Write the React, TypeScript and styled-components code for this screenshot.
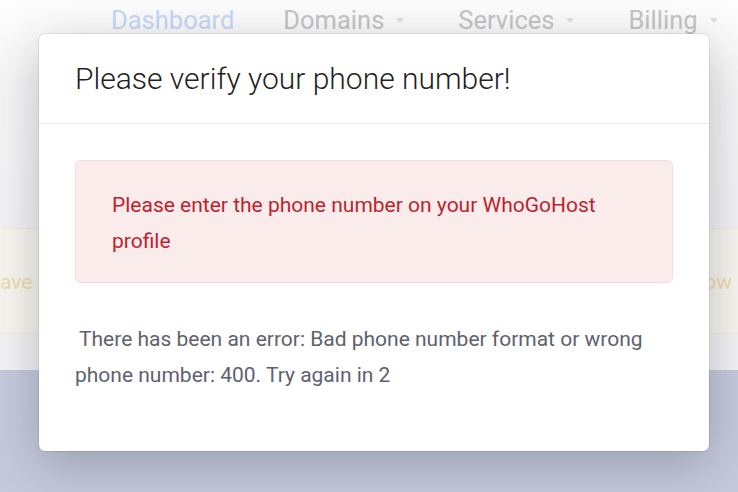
import React from "react";
import styled, { createGlobalStyle } from "styled-components";

const Global = createGlobalStyle`
  html, body { margin: 0; padding: 0; }
  body {
    font-family: Roboto, "Noto Sans", "Liberation Sans", sans-serif;
    background: #f4f4f5;
    overflow: hidden;
  }
`;

const Page = styled.div`
  position: relative;
  width: 738px;
  height: 492px;
  overflow: hidden;
  display: flex;
  flex-direction: column;
  background: #f4f4f5;
`;

const Top = styled.div`
  height: 228px;
  background: linear-gradient(to bottom, #fdfdfd 0px, #f6f6f6 90px, #f3f3f4 228px);
`;

const TopBar = styled.nav`
  height: 39px;
  display: flex;
  align-items: center;
  gap: 49px;
  padding-left: 111px;
  white-space: nowrap;
`;

const NavItem = styled.span<{ $active?: boolean }>`
  font-size: 25.5px;
  font-weight: 400;
  color: ${(p) => (p.$active ? "#c6d7f6" : "#c4c4c4")};
  display: flex;
  align-items: center;
  gap: 12px;
`;

const Caret = styled.span`
  width: 0;
  height: 0;
  border-left: 4.5px solid transparent;
  border-right: 4.5px solid transparent;
  border-top: 5px solid #dedede;
  margin-top: 2px;
  margin-right: 5px;
`;

const WarnBand = styled.div`
  height: 102px;
  border-top: 1px solid #f3ecdc;
  border-bottom: 1px solid #f3ecdc;
  background: #f8f6ef;
  display: flex;
  align-items: center;
  justify-content: space-between;
  padding: 2px 6px 0 0;
  font-size: 21px;
  color: #efdcae;
`;

const Gap = styled.div`
  height: 36px;
  background: #f3f3f4;
`;

const Lower = styled.div`
  flex: 1;
  background: #c5cadc;
`;

const Modal = styled.div`
  position: absolute;
  left: 39px;
  top: 34px;
  width: 670px;
  height: 417px;
  box-sizing: border-box;
  background: #fff;
  border-radius: 6px;
  box-shadow: 0 0 0 1px rgba(0, 0, 0, 0.08), 0 14px 50px rgba(40, 40, 60, 0.28);
  display: flex;
  flex-direction: column;
`;

const ModalHeader = styled.div`
  height: 90px;
  box-sizing: border-box;
  padding: 0 36px;
  display: flex;
  align-items: center;
  border-bottom: 1px solid #e6e6e6;
`;

const Title = styled.h2`
  margin: 0;
  font-size: 30px;
  font-weight: 300;
  color: #1f1f1f;
`;

const ModalBody = styled.div`
  padding: 36px;
`;

const Alert = styled.div`
  background: #fbecec;
  border: 1px solid #f7dadc;
  border-radius: 6px;
  padding: 26px 36px 23px;
  font-size: 21px;
  line-height: 36px;
  color: #c01f2f;
`;

const Message = styled.p`
  margin: 38px 0 0;
  font-size: 21px;
  line-height: 36px;
  color: #5e626e;
  text-indent: 4px;
`;

export default function App() {
  return (
    <>
      <Global />
      <Page>
        <Top>
          <TopBar>
            <NavItem $active>Dashboard</NavItem>
            <NavItem>
              Domains <Caret />
            </NavItem>
            <NavItem>
              Services <Caret />
            </NavItem>
            <NavItem>
              Billing <Caret />
            </NavItem>
          </TopBar>
        </Top>
        <WarnBand>
          <span>ave</span>
          <span>ow</span>
        </WarnBand>
        <Gap />
        <Lower />
        <Modal>
          <ModalHeader>
            <Title>Please verify your phone number!</Title>
          </ModalHeader>
          <ModalBody>
            <Alert>Please enter the phone number on your WhoGoHost profile</Alert>
            <Message>
              There has been an error: Bad phone number format or wrong phone number: 400. Try again in 2
            </Message>
          </ModalBody>
        </Modal>
      </Page>
    </>
  );
}
